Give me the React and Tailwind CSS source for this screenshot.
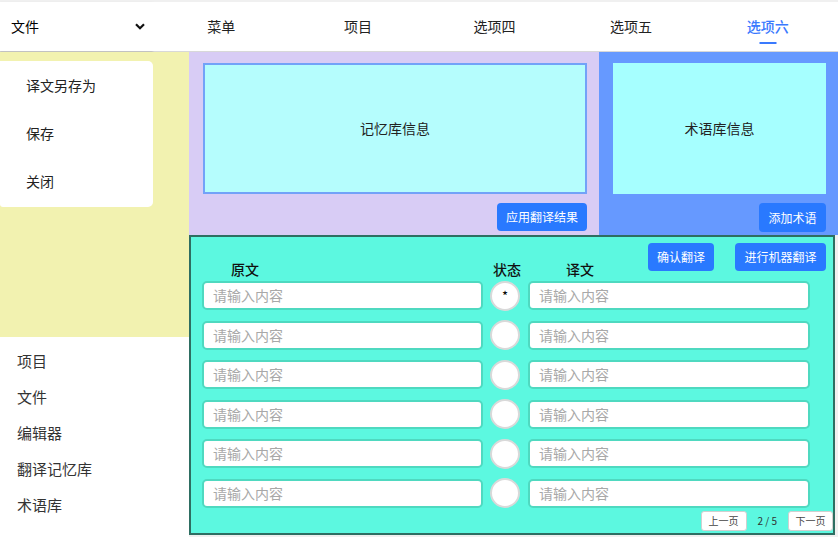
import React from "react";

const font = { fontFamily: '"Noto Sans CJK SC", "Noto Sans", sans-serif' };

function Row({ first }) {
  return (
    <div className="flex items-center h-[29px]">
      <div className="ml-[11px] w-[281px] h-[29px] bg-white rounded-[5px] border-2 border-[#4fd9c0] flex items-center px-[9px] text-[14px] text-[#a8a8a8]">
        请输入内容
      </div>
      <div className="ml-[7px] w-[30px] h-[30px] rounded-full bg-white border-2 border-[#d9d9d9] flex items-center justify-center text-[13px] text-black">
        {first ? "*" : ""}
      </div>
      <div className="ml-[8px] w-[282px] h-[29px] bg-white rounded-[5px] border-2 border-[#4fd9c0] flex items-center px-[9px] text-[14px] text-[#a8a8a8]">
        请输入内容
      </div>
    </div>
  );
}

export default function App() {
  const navs = ["菜单", "项目", "选项四", "选项五", "选项六"];
  return (
    <div style={font} className="w-[838px] h-[537px] bg-[#f0f0f0] flex flex-col overflow-hidden">
      <div className="h-[52px] flex pt-[2px] border-b border-[#d8d8d8]">
        <div className="w-[153px] bg-white flex items-center justify-between pl-[11px] pr-[8px] shadow-[0_1px_2px_rgba(0,0,0,0.15)] text-[14px] text-black">
          <span>文件</span>
          <svg width="10" height="7" viewBox="0 0 10 7"><path d="M1 1.2 L5 5.2 L9 1.2" stroke="#111" strokeWidth="2.2" fill="none" /></svg>
        </div>
        <div className="flex-1 bg-white flex pr-[2px]">
          {navs.map((n, i) => (
            <div key={n} className="flex-1 flex flex-col items-center justify-center relative">
              <span className={"text-[14px] " + (i === 4 ? "text-[#3a7afe] font-medium" : "text-[#222]")}>{n}</span>
              {i === 4 && <div className="absolute left-1/2 -translate-x-1/2 top-[40px] w-[17px] h-[2px] bg-[#3a7afe]" />}
            </div>
          ))}
        </div>
      </div>
      <div className="flex-1 flex">
        <div className="w-[189px] flex flex-col">
          <div className="h-[285px] bg-[#f2f2b0] pt-[9px]">
            <div className="w-[153px] h-[146px] bg-white rounded-r-[5px] rounded-bl-[3px] flex flex-col pl-[26px] pt-[14px] gap-[27px] text-[14px] leading-[21px] text-[#222]">
              <span>译文另存为</span>
              <span>保存</span>
              <span>关闭</span>
            </div>
          </div>
          <div className="flex-1 bg-white flex flex-col pl-[17px] pt-[12px] gap-[13px] text-[15px] text-[#333]">
            <span className="leading-[23px]">项目</span>
            <span className="leading-[23px]">文件</span>
            <span className="leading-[23px]">编辑器</span>
            <span className="leading-[23px]">翻译记忆库</span>
            <span className="leading-[23px]">术语库</span>
          </div>
        </div>
        <div className="flex-1 flex flex-col">
          <div className="h-[183px] flex">
            <div className="w-[410px] bg-[#d8ccf5] flex flex-col pt-[11px] pl-[14px] pr-[12px]">
              <div className="h-[131px] bg-[#b5fdfd] border-2 border-[#72a2f8] flex items-center justify-center text-[14px] text-[#222]">
                记忆库信息
              </div>
              <div className="flex justify-end mt-[9px]">
                <div className="w-[90px] h-[28px] bg-[#2979ff] rounded-[4px] flex items-center justify-center text-[12px] text-white">应用翻译结果</div>
              </div>
            </div>
            <div className="flex-1 bg-[#6699ff] flex flex-col pt-[11px] pl-[14px] pr-[12px]">
              <div className="h-[131px] bg-[#a6ffff] flex items-center justify-center text-[14px] text-[#222]">
                术语库信息
              </div>
              <div className="flex justify-end mt-[9px]">
                <div className="w-[67px] h-[29px] bg-[#2979ff] rounded-[4px] flex items-center justify-center text-[12px] text-white">添加术语</div>
              </div>
            </div>
          </div>
          <div className="flex-1 bg-[#5cf8e0] border-2 border-[#2e6e62] mr-[3px] mb-[2px] flex flex-col">
            <div className="h-[44px] relative">
              <div className="absolute right-[119px] top-[6px] w-[66px] h-[28px] bg-[#2979ff] rounded-[4px] flex items-center justify-center text-[12px] text-white">确认翻译</div>
              <div className="absolute right-[7px] top-[6px] w-[91px] h-[28px] bg-[#2979ff] rounded-[4px] flex items-center justify-center text-[12px] text-white">进行机器翻译</div>
              <span className="absolute left-[40px] top-[22px] text-[14px] font-medium text-[#111]">原文</span>
              <span className="absolute left-[302px] top-[22px] text-[14px] font-medium text-[#111]">状态</span>
              <span className="absolute left-[375px] top-[22px] text-[14px] font-medium text-[#111]">译文</span>
            </div>
            <div className="flex flex-col gap-[10.6px]">
              {[0, 1, 2, 3, 4, 5].map((i) => (
                <Row key={i} first={i === 0} />
              ))}
            </div>
            <div className="flex justify-end items-center mt-[3px] gap-[11px]">
              <div className="w-[46px] h-[20px] bg-white border border-[#d0d0d0] rounded-[3px] flex items-center justify-center text-[10px] text-[#444]">上一页</div>
              <span className="text-[10px] text-[#333]">2 / 5</span>
              <div className="w-[45px] h-[20px] bg-white border border-[#d0d0d0] rounded-[3px] flex items-center justify-center text-[10px] text-[#444]">下一页</div>
            </div>
          </div>
        </div>
      </div>
    </div>
  );
}
